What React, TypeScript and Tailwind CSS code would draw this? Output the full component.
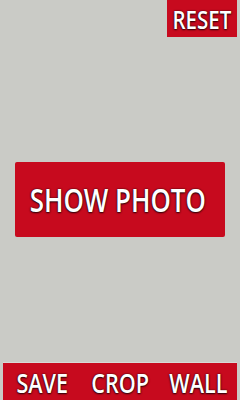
export default function App() {
  const shadow = "[text-shadow:0_0_2px_rgba(0,0,0,0.9),0_1px_2px_rgba(0,0,0,0.7)]";

  return (
    <div className="flex flex-col h-[400px] w-[240px] bg-[#cacbc6] font-['Open_Sans',sans-serif]">
      {/* top bar */}
      <div className="flex justify-end pr-[3px]">
        <button
          className={`flex items-center justify-center w-[70px] h-[37px] bg-[#c70a1e] text-white text-[25px] leading-none font-semibold ${shadow}`}
        >
          <span className="inline-block scale-x-[0.82] translate-y-[1px]">RESET</span>
        </button>
      </div>

      {/* middle */}
      <div className="flex-1 flex items-center justify-center">
        <button
          className={`flex items-center justify-center w-[210px] h-[75px] bg-[#c70a1e] rounded-[2px] text-white text-[32px] font-semibold ${shadow}`}
        >
          <span className="inline-block shrink-0 scale-x-[0.81] whitespace-nowrap -translate-x-[2px]">SHOW PHOTO</span>
        </button>
      </div>

      {/* bottom bar */}
      <div className="grid grid-cols-3 h-[38px] mx-[3px] bg-[#c70a1e] border-t border-[#d9d9d6]">
        {["SAVE", "CROP", "WALL"].map((label) => (
          <button
            key={label}
            className={`flex items-center justify-center text-white text-[27px] leading-none font-semibold ${shadow}`}
          >
            <span className="inline-block shrink-0 scale-x-[0.8] translate-y-[1px]">{label}</span>
          </button>
        ))}
      </div>
    </div>
  );
}
